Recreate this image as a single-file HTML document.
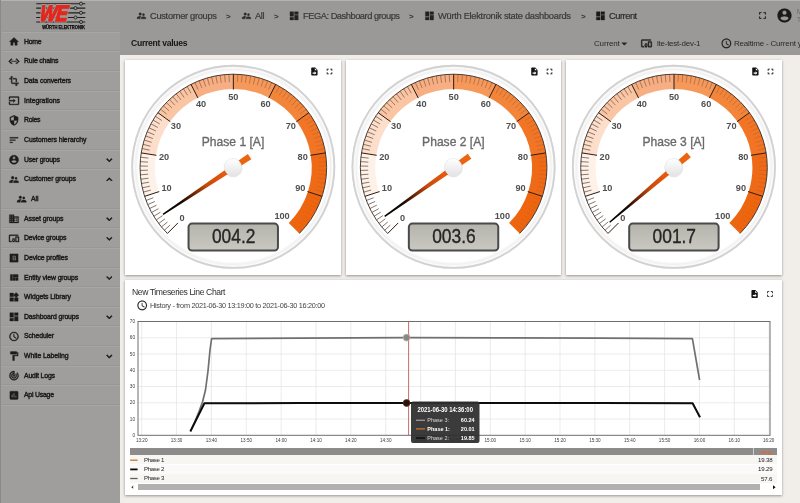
<!DOCTYPE html>
<html lang="en"><head><meta charset="utf-8"><title>Current</title>
<style>
html,body{margin:0;padding:0}
body{width:800px;height:503px;overflow:hidden;background:#f1eeea;position:relative;font-family:"Liberation Sans",sans-serif}
.t{position:absolute;white-space:nowrap;will-change:transform}
.abs{position:absolute}
#sidebar{position:absolute;left:0;top:0;width:120.25px;height:503px;background:#a09e9c;overflow:hidden}
#topbar{position:absolute;left:120.25px;top:0;width:679.75px;height:54.5px;background:#9b9998}
.sep{position:absolute;left:2px;width:118px;height:1px;background:#999796;box-shadow:0 0.8px 0 #aaa8a7}
.card{position:absolute;background:#fff;box-shadow:0 0.9px 2.6px 0.4px rgba(0,0,0,.42)}
svg{position:absolute;left:0;top:0;overflow:visible}
svg text{font-family:"Liberation Sans",sans-serif}
</style></head><body>

<div class="card" style="left:124.5px;top:59.5px;width:216.5px;height:215.5px"></div>
<div class="card" style="left:346px;top:59.5px;width:215px;height:215.5px"></div>
<div class="card" style="left:566px;top:59.5px;width:216px;height:215.5px"></div>
<div class="card" style="left:124.5px;top:279.5px;width:657.5px;height:215.5px"></div>
<div id="sidebar">
<div class="abs" style="left:0;top:0;width:120.25px;height:31px;background:#9d9b99"></div>
<div class="abs" style="left:0;top:0;width:120.25px;height:1px;background:#b5b3b2"></div>
<div class="abs" style="left:0;top:0;width:1px;height:503px;background:#8b8988"></div>
<div class="sep" style="top:30.50px"></div>
<div class="sep" style="top:50.19px"></div>
<div class="sep" style="top:69.88px"></div>
<div class="sep" style="top:89.57px"></div>
<div class="sep" style="top:109.26px"></div>
<div class="sep" style="top:128.95px"></div>
<div class="sep" style="top:148.64px"></div>
<div class="sep" style="top:168.33px"></div>
<div class="sep" style="top:207.71px"></div>
<div class="sep" style="top:227.32px"></div>
<div class="sep" style="top:246.93px"></div>
<div class="sep" style="top:266.54px"></div>
<div class="sep" style="top:286.15px"></div>
<div class="sep" style="top:305.76px"></div>
<div class="sep" style="top:325.37px"></div>
<div class="sep" style="top:344.98px"></div>
<div class="sep" style="top:364.59px"></div>
<div class="sep" style="top:384.20px"></div>
<div class="sep" style="top:403.81px"></div>
</div>
<span class="t" id="sb0" style="left:23.8px;top:37.51px;font-size:6.9px;line-height:8.28px;font-weight:400;color:#1d1d1d;letter-spacing:-0.297px;-webkit-text-stroke:0.42px #1a1a1a;">Home</span>
<span class="t" id="sb1" style="left:23.8px;top:57.20px;font-size:6.9px;line-height:8.28px;font-weight:400;color:#1d1d1d;letter-spacing:-0.152px;-webkit-text-stroke:0.42px #1a1a1a;">Rule chains</span>
<span class="t" id="sb2" style="left:23.8px;top:76.89px;font-size:6.9px;line-height:8.28px;font-weight:400;color:#1d1d1d;letter-spacing:-0.117px;-webkit-text-stroke:0.42px #1a1a1a;">Data converters</span>
<span class="t" id="sb3" style="left:23.8px;top:96.58px;font-size:6.9px;line-height:8.28px;font-weight:400;color:#1d1d1d;letter-spacing:-0.001px;-webkit-text-stroke:0.42px #1a1a1a;">Integrations</span>
<span class="t" id="sb4" style="left:23.8px;top:116.27px;font-size:6.9px;line-height:8.28px;font-weight:400;color:#1d1d1d;letter-spacing:-0.281px;-webkit-text-stroke:0.42px #1a1a1a;">Roles</span>
<span class="t" id="sb5" style="left:23.8px;top:135.96px;font-size:6.9px;line-height:8.28px;font-weight:400;color:#1d1d1d;letter-spacing:-0.060px;-webkit-text-stroke:0.42px #1a1a1a;">Customers hierarchy</span>
<span class="t" id="sb6" style="left:23.8px;top:155.65px;font-size:6.9px;line-height:8.28px;font-weight:400;color:#1d1d1d;letter-spacing:-0.155px;-webkit-text-stroke:0.42px #1a1a1a;">User groups</span>
<span class="t" id="sb7" style="left:23.8px;top:175.34px;font-size:6.9px;line-height:8.28px;font-weight:400;color:#1d1d1d;letter-spacing:-0.061px;-webkit-text-stroke:0.42px #1a1a1a;">Customer groups</span>
<span class="t" id="sb8" style="left:31px;top:195.03px;font-size:6.9px;line-height:8.28px;font-weight:400;color:#1d1d1d;letter-spacing:-0.086px;-webkit-text-stroke:0.42px #1a1a1a;">All</span>
<span class="t" id="sb9" style="left:23.8px;top:214.67px;font-size:6.9px;line-height:8.28px;font-weight:400;color:#1d1d1d;letter-spacing:-0.065px;-webkit-text-stroke:0.42px #1a1a1a;">Asset groups</span>
<span class="t" id="sb10" style="left:23.8px;top:234.28px;font-size:6.9px;line-height:8.28px;font-weight:400;color:#1d1d1d;letter-spacing:-0.129px;-webkit-text-stroke:0.42px #1a1a1a;">Device groups</span>
<span class="t" id="sb11" style="left:23.8px;top:253.90px;font-size:6.9px;line-height:8.28px;font-weight:400;color:#1d1d1d;letter-spacing:-0.086px;-webkit-text-stroke:0.42px #1a1a1a;">Device profiles</span>
<span class="t" id="sb12" style="left:23.8px;top:273.51px;font-size:6.9px;line-height:8.28px;font-weight:400;color:#1d1d1d;letter-spacing:-0.101px;-webkit-text-stroke:0.42px #1a1a1a;">Entity view groups</span>
<span class="t" id="sb13" style="left:23.8px;top:293.12px;font-size:6.9px;line-height:8.28px;font-weight:400;color:#1d1d1d;letter-spacing:-0.062px;-webkit-text-stroke:0.42px #1a1a1a;">Widgets Library</span>
<span class="t" id="sb14" style="left:23.8px;top:312.73px;font-size:6.9px;line-height:8.28px;font-weight:400;color:#1d1d1d;letter-spacing:-0.114px;-webkit-text-stroke:0.42px #1a1a1a;">Dashboard groups</span>
<span class="t" id="sb15" style="left:23.8px;top:332.34px;font-size:6.9px;line-height:8.28px;font-weight:400;color:#1d1d1d;letter-spacing:-0.129px;-webkit-text-stroke:0.42px #1a1a1a;">Scheduler</span>
<span class="t" id="sb16" style="left:23.8px;top:351.94px;font-size:6.9px;line-height:8.28px;font-weight:400;color:#1d1d1d;letter-spacing:-0.084px;-webkit-text-stroke:0.42px #1a1a1a;">White Labeling</span>
<span class="t" id="sb17" style="left:23.8px;top:371.56px;font-size:6.9px;line-height:8.28px;font-weight:400;color:#1d1d1d;letter-spacing:-0.174px;-webkit-text-stroke:0.42px #1a1a1a;">Audit Logs</span>
<span class="t" id="sb18" style="left:23.8px;top:391.17px;font-size:6.9px;line-height:8.28px;font-weight:400;color:#1d1d1d;letter-spacing:-0.225px;-webkit-text-stroke:0.42px #1a1a1a;">Api Usage</span>
<div id="topbar"><div class="abs" style="left:0;top:0;width:680px;height:1px;background:#b5b3b2"></div></div>
<span class="t" id="bc1" style="left:150px;top:11.12px;font-size:9.3px;line-height:11.16px;font-weight:400;color:#3a3a3a;letter-spacing:-0.308px;-webkit-text-stroke:0.22px #3a3a3a;">Customer groups</span>
<span class="t" id="bcs1" style="left:225.5px;top:11.50px;font-size:8px;line-height:9.6px;font-weight:700;color:#333;">&gt;</span>
<span class="t" id="bc2" style="left:255px;top:11.12px;font-size:9.3px;line-height:11.16px;font-weight:400;color:#3a3a3a;letter-spacing:-0.422px;-webkit-text-stroke:0.22px #3a3a3a;">All</span>
<span class="t" id="bcs2" style="left:273.5px;top:11.50px;font-size:8px;line-height:9.6px;font-weight:700;color:#333;">&gt;</span>
<span class="t" id="bc3" style="left:302.5px;top:11.12px;font-size:9.3px;line-height:11.16px;font-weight:400;color:#3a3a3a;letter-spacing:-0.475px;-webkit-text-stroke:0.22px #3a3a3a;">FEGA: Dashboard groups</span>
<span class="t" id="bcs3" style="left:408.5px;top:11.50px;font-size:8px;line-height:9.6px;font-weight:700;color:#333;">&gt;</span>
<span class="t" id="bc4" style="left:437.5px;top:11.12px;font-size:9.3px;line-height:11.16px;font-weight:400;color:#3a3a3a;letter-spacing:-0.285px;-webkit-text-stroke:0.22px #3a3a3a;">Würth Elektronik state dashboards</span>
<span class="t" id="bcs4" style="left:580.5px;top:11.50px;font-size:8px;line-height:9.6px;font-weight:700;color:#333;">&gt;</span>
<span class="t" id="bc5" style="left:608.8px;top:11.12px;font-size:9.3px;line-height:11.16px;font-weight:400;color:#222;letter-spacing:-0.469px;-webkit-text-stroke:0.22px #3a3a3a;">Current</span>
<span class="t" id="usr1" style="left:797px;top:7.60px;font-size:6.5px;line-height:7.8px;font-weight:400;color:#6a6866;">M</span>
<span class="t" id="usr2" style="left:797px;top:15.60px;font-size:6.5px;line-height:7.8px;font-weight:400;color:#6a6866;">T</span>
<span class="t" id="cv" style="left:130.5px;top:38.04px;font-size:8.6px;line-height:10.32px;font-weight:700;color:#151515;letter-spacing:-0.284px;">Current values</span>
<span class="t" id="st" style="left:594.3px;top:38.60px;font-size:8px;line-height:9.6px;font-weight:400;color:#2a2a2a;letter-spacing:-0.165px;">Current</span>
<span class="t" id="dev" style="left:657px;top:38.60px;font-size:8px;line-height:9.6px;font-weight:400;color:#2a2a2a;letter-spacing:-0.245px;">lte-test-dev-1</span>
<span class="t" id="rt" style="left:734px;top:38.60px;font-size:8px;line-height:9.6px;font-weight:400;color:#2a2a2a;letter-spacing:-0.2px;">Realtime - Current year</span>
<span class="t" id="ct" style="left:132px;top:287.14px;font-size:8.6px;line-height:10.32px;font-weight:400;color:#2e2e2e;letter-spacing:-0.403px;">New Timeseries Line Chart</span>
<span class="t" id="hs" style="left:150px;top:301.52px;font-size:7.3px;line-height:8.76px;font-weight:400;color:#444;letter-spacing:-0.294px;">History - from 2021-06-30 13:19:00 to 2021-06-30 16:20:00</span>
<div class="abs" style="left:130px;top:448.4px;width:647px;height:6.8px;background:#8e8c8b"></div>
<div class="abs" style="left:752.6px;top:448.4px;width:1px;height:6.8px;background:#cfcdcb"></div>
<span class="t" id="avg" style="left:766.4px;top:447.78px;font-size:6.2px;line-height:7.44px;font-weight:700;color:#e2653c;transform:translateX(-50%);">avg</span>
<div class="abs" style="left:130px;top:455.2px;width:647px;height:9.3px;background:#f8f6f2"></div>
<div class="abs" style="left:130px;top:464.5px;width:647px;height:9.3px;background:#fbfaf8"></div>
<div class="abs" style="left:130px;top:473.8px;width:647px;height:9.3px;background:#f8f6f2"></div>
<span class="t" id="lg0" style="left:143.6px;top:455.94px;font-size:6.1px;line-height:7.32px;font-weight:400;color:#222;letter-spacing:-0.346px;">Phase 1</span>
<span class="t" id="lv0" style="right:27.799999999999955px;top:456.24px;font-size:6.1px;line-height:7.32px;font-weight:400;color:#222;letter-spacing:-0.15px;">19.38</span>
<span class="t" id="lg1" style="left:143.6px;top:465.14px;font-size:6.1px;line-height:7.32px;font-weight:400;color:#222;letter-spacing:-0.346px;">Phase 2</span>
<span class="t" id="lv1" style="right:27.799999999999955px;top:465.44px;font-size:6.1px;line-height:7.32px;font-weight:400;color:#222;letter-spacing:-0.15px;">19.29</span>
<span class="t" id="lg2" style="left:143.6px;top:474.24px;font-size:6.1px;line-height:7.32px;font-weight:400;color:#222;letter-spacing:-0.346px;">Phase 3</span>
<span class="t" id="lv2" style="right:27.799999999999955px;top:474.54px;font-size:6.1px;line-height:7.32px;font-weight:400;color:#222;letter-spacing:-0.15px;">57.6</span>
<div class="abs" style="left:138px;top:484.3px;width:622px;height:5.4px;background:#b3b1af"></div>
<svg width="800" height="503" viewBox="0 0 800 503"><g transform="translate(8.50,36.15) scale(0.4583)" fill="#1c1c1c" stroke="#1c1c1c" stroke-width="0.7" stroke-linejoin="round"><path d="M10 20v-6h4v6h5v-8h3L12 3 2 12h3v8z"/></g>
<g transform="translate(8.50,55.84) scale(0.4583)" fill="#1c1c1c" stroke="#1c1c1c" stroke-width="0.7" stroke-linejoin="round"><path stroke-width="1.2" d="M7.8 7.4L6.4 6 0.4 12l6 6 1.4-1.4L3.2 12zM16.2 7.4L17.6 6l6 6-6 6-1.4-1.4L20.8 12z"/><rect x="7" y="11" width="2" height="2"/><rect x="11" y="11" width="2" height="2"/><rect x="15" y="11" width="2" height="2"/></g>
<g transform="translate(8.50,75.53) scale(0.4583)" fill="#1c1c1c" stroke="#1c1c1c" stroke-width="0.7" stroke-linejoin="round"><path d="M22 18v-2H8V4h2L7 1 4 4h2v2H2v2h4v8c0 1.1.9 2 2 2h8v2h-2l3 3 3-3h-2v-2h4zM10 8h6v6h2V8c0-1.1-.9-2-2-2h-6v2z"/></g>
<g transform="translate(8.50,95.22) scale(0.4583)" fill="#1c1c1c" stroke="#1c1c1c" stroke-width="0.7" stroke-linejoin="round"><path d="M21 3.01H3c-1.1 0-2 .9-2 2V9h2V4.99h18v14.03H3V15H1v4.01c0 1.1.9 1.98 2 1.98h18c1.1 0 2-.88 2-1.98v-14c0-1.11-.9-2-2-2zM11 16l4-4-4-4v3H1v2h10v3z"/></g>
<g transform="translate(8.50,114.91) scale(0.4583)" fill="#1c1c1c" stroke="#1c1c1c" stroke-width="0.7" stroke-linejoin="round"><path d="M12 1L3 5v6c0 5.55 3.84 10.74 9 12 5.16-1.26 9-6.45 9-12V5l-9-4zm0 10.99h7c-.53 4.12-3.28 7.79-7 8.94V12H5V6.3l7-3.11v8.8z"/></g>
<g transform="translate(8.50,134.59) scale(0.4583)" fill="#1c1c1c" stroke="#1c1c1c" stroke-width="0.7" stroke-linejoin="round"><path d="M3 18h6v-2H3v2zM3 6v2h18V6H3zm0 7h12v-2H3v2z"/></g>
<g transform="translate(8.50,154.28) scale(0.4583)" fill="#1c1c1c" stroke="#1c1c1c" stroke-width="0.7" stroke-linejoin="round"><path d="M12 2C6.48 2 2 6.48 2 12s4.48 10 10 10 10-4.48 10-10S17.52 2 12 2zm0 3c1.66 0 3 1.34 3 3s-1.34 3-3 3-3-1.34-3-3 1.340-3 3-3zm0 14.2c-2.5 0-4.71-1.280-6-3.220.03-1.990 4-3.080 6-3.080 1.990 0 5.970 1.090 6 3.080-1.290 1.940-3.500 3.220-6 3.220z"/></g>
<g transform="translate(103.80,154.59) scale(0.4583)" fill="#111" stroke="#111" stroke-width="0.7" stroke-linejoin="round"><path stroke="#111" stroke-width="1.3" d="M7.410 8.590L12 13.170l4.590-4.580L18 10l-6 6-6-6z"/></g>
<g transform="translate(8.50,173.97) scale(0.4583)" fill="#1c1c1c" stroke="#1c1c1c" stroke-width="0.7" stroke-linejoin="round"><path d="M16.5 12c1.380 0 2.490-1.120 2.490-2.500S17.880 7 16.500 7C15.120 7 14 8.120 14 9.500s1.120 2.500 2.500 2.500zM9 11c1.660 0 2.990-1.340 2.990-3S10.660 5 9 5C7.340 5 6 6.340 6 8s1.340 3 3 3zm7.500 3c-1.830 0-5.500.920-5.500 2.750V19h11v-2.250c0-1.830-3.670-2.750-5.500-2.750zM9 13c-2.330 0-7 1.170-7 3.500V19h7v-2.250c0-.850.330-2.340 2.370-3.470C10.500 13.100 9.660 13 9 13z"/></g>
<g transform="translate(103.80,173.97) scale(0.4583)" fill="#111" stroke="#111" stroke-width="0.7" stroke-linejoin="round"><path stroke="#111" stroke-width="1.3" d="M7.410 15.410L12 10.830l4.590 4.580L18 14l-6-6-6 6z"/></g>
<g transform="translate(16.20,193.66) scale(0.4583)" fill="#1c1c1c" stroke="#1c1c1c" stroke-width="0.7" stroke-linejoin="round"><path d="M16.5 12c1.380 0 2.490-1.120 2.490-2.500S17.880 7 16.500 7C15.120 7 14 8.120 14 9.500s1.120 2.500 2.500 2.500zM9 11c1.660 0 2.990-1.340 2.990-3S10.660 5 9 5C7.340 5 6 6.340 6 8s1.340 3 3 3zm7.500 3c-1.830 0-5.500.920-5.500 2.750V19h11v-2.250c0-1.830-3.670-2.750-5.500-2.750zM9 13c-2.330 0-7 1.170-7 3.500V19h7v-2.250c0-.850.330-2.340 2.370-3.470C10.500 13.100 9.660 13 9 13z"/></g>
<g transform="translate(8.50,213.31) scale(0.4583)" fill="#1c1c1c" stroke="#1c1c1c" stroke-width="0.7" stroke-linejoin="round"><path d="M12 7V3H2v18h20V7H12zM6 19H4v-2h2v2zm0-4H4v-2h2v2zm0-4H4V9h2v2zm0-4H4V5h2v2zm4 12H8v-2h2v2zm0-4H8v-2h2v2zm0-4H8V9h2v2zm0-4H8V5h2v2zm10 12h-8v-2h2v-2h-2v-2h2v-2h-2V9h8v10zm-2-8h-2v2h2v-2zm0 4h-2v2h2v-2z"/></g>
<g transform="translate(103.80,213.61) scale(0.4583)" fill="#111" stroke="#111" stroke-width="0.7" stroke-linejoin="round"><path stroke="#111" stroke-width="1.3" d="M7.410 8.590L12 13.170l4.590-4.580L18 10l-6 6-6-6z"/></g>
<g transform="translate(8.50,232.92) scale(0.4583)" fill="#1c1c1c" stroke="#1c1c1c" stroke-width="0.7" stroke-linejoin="round"><path d="M3 6h18V4H3c-1.100 0-2 .900-2 2v12c0 1.100.900 2 2 2h4v-2H3V6zm10 6H9v1.780c-.610.550-1 1.330-1 2.220s.390 1.670 1 2.220V20h4v-1.780c.610-.550 1-1.340 1-2.220s-.390-1.670-1-2.220V12zm-2 5.500c-.830 0-1.500-.670-1.500-1.500s.670-1.500 1.500-1.500 1.500.670 1.500 1.500-.670 1.500-1.500 1.500zM22 8h-6c-.500 0-1 .500-1 1v10c0 .500.500 1 1 1h6c.500 0 1-.500 1-1V9c0-.500-.500-1-1-1zm-1 10h-4v-8h4v8z"/></g>
<g transform="translate(103.80,233.22) scale(0.4583)" fill="#111" stroke="#111" stroke-width="0.7" stroke-linejoin="round"><path stroke="#111" stroke-width="1.3" d="M7.410 8.590L12 13.170l4.590-4.580L18 10l-6 6-6-6z"/></g>
<g transform="translate(8.50,252.54) scale(0.4583)" fill="#1c1c1c" stroke="#1c1c1c" stroke-width="0.7" stroke-linejoin="round"><path d="M3 3h18v18H3z"/><path fill="#a09e9c" d="M9 7h4.200c1.800 0 3 1 3 2.600 0 1-.5 1.700-1.300 2.100 1.100.3 1.800 1.200 1.800 2.400 0 1.800-1.300 2.900-3.300 2.900H9zm2 1.800v2.300h1.900c.8 0 1.300-.4 1.300-1.150s-.5-1.150-1.300-1.150zm0 4v2.400h2.200c.9 0 1.400-.4 1.400-1.200s-.5-1.200-1.400-1.200z"/></g>
<g transform="translate(8.50,272.15) scale(0.4583)" fill="#1c1c1c" stroke="#1c1c1c" stroke-width="0.7" stroke-linejoin="round"><path d="M10 18h5v-6h-5v6zm-6 0h5V5H4v13zm12 0h5v-6h-5v6zM10 5v6h11V5H10z"/></g>
<g transform="translate(103.80,272.45) scale(0.4583)" fill="#111" stroke="#111" stroke-width="0.7" stroke-linejoin="round"><path stroke="#111" stroke-width="1.3" d="M7.410 8.590L12 13.170l4.590-4.580L18 10l-6 6-6-6z"/></g>
<g transform="translate(8.50,291.75) scale(0.4583)" fill="#1c1c1c" stroke="#1c1c1c" stroke-width="0.7" stroke-linejoin="round"><path d="M13 13v8h8v-8h-8zM3 21h8v-8H3v8zM3 3v8h8V3H3zm13.660-1.310L11 7.340 16.660 13l5.660-5.660-5.660-5.650z"/></g>
<g transform="translate(8.50,311.37) scale(0.4583)" fill="#1c1c1c" stroke="#1c1c1c" stroke-width="0.7" stroke-linejoin="round"><path d="M3 13h8V3H3v10zm0 8h8v-6H3v6zm10 0h8V11h-8v10zm0-18v6h8V3h-8z"/></g>
<g transform="translate(103.80,311.67) scale(0.4583)" fill="#111" stroke="#111" stroke-width="0.7" stroke-linejoin="round"><path stroke="#111" stroke-width="1.3" d="M7.410 8.590L12 13.170l4.590-4.580L18 10l-6 6-6-6z"/></g>
<g transform="translate(8.50,330.98) scale(0.4583)" fill="#1c1c1c" stroke="#1c1c1c" stroke-width="0.7" stroke-linejoin="round"><path d="M11.990 2C6.470 2 2 6.480 2 12s4.470 10 9.990 10C17.520 22 22 17.520 22 12S17.520 2 11.990 2zM12 20c-4.420 0-8-3.580-8-8s3.580-8 8-8 8 3.580 8 8-3.580 8-8 8zm.500-13H11v6l5.250 3.150.750-1.230-4.500-2.670z"/></g>
<g transform="translate(8.50,350.58) scale(0.4583)" fill="#1c1c1c" stroke="#1c1c1c" stroke-width="0.7" stroke-linejoin="round"><path d="M18 4V3c0-.550-.450-1-1-1H5c-.550 0-1 .450-1 1v4c0 .550.450 1 1 1h12c.550 0 1-.450 1-1V6h1v4H9v11c0 .550.450 1 1 1h2c.550 0 1-.450 1-1v-9h8V4h-3z"/></g>
<g transform="translate(103.80,350.88) scale(0.4583)" fill="#111" stroke="#111" stroke-width="0.7" stroke-linejoin="round"><path stroke="#111" stroke-width="1.3" d="M7.410 8.590L12 13.170l4.590-4.580L18 10l-6 6-6-6z"/></g>
<g transform="translate(8.50,370.19) scale(0.4583)" fill="#1c1c1c" stroke="#1c1c1c" stroke-width="0.7" stroke-linejoin="round"><path d="M19.070 4.930l-1.410 1.410C19.100 7.790 20 9.790 20 12c0 4.420-3.580 8-8 8s-8-3.580-8-8c0-4.080 3.050-7.440 7-7.930v2.020C8.160 6.570 6 9.030 6 12c0 3.310 2.690 6 6 6s6-2.690 6-6c0-1.660-.670-3.160-1.760-4.240l-1.410 1.410C15.550 9.900 16 10.900 16 12c0 2.210-1.790 4-4 4s-4-1.790-4-4c0-1.860 1.280-3.410 3-3.860v2.140c-.600.350-1 .980-1 1.720 0 1.100.900 2 2 2s2-.900 2-2c0-.740-.400-1.380-1-1.720V2h-1C6.480 2 2 6.480 2 12s4.480 10 10 10 10-4.480 10-10c0-2.760-1.120-5.260-2.930-7.070z"/></g>
<g transform="translate(8.50,389.81) scale(0.4583)" fill="#1c1c1c" stroke="#1c1c1c" stroke-width="0.7" stroke-linejoin="round"><path d="M19 3H5c-1.100 0-2 .900-2 2v14c0 1.100.900 2 2 2h14c1.100 0 2-.900 2-2V5c0-1.100-.900-2-2-2zM9 17H7v-7h2v7zm4 0h-2V7h2v10zm4 0h-2v-4h2v4z"/></g>
<line x1="36.2" y1="3.7" x2="85.3" y2="3.7" stroke="#1e1e1e" stroke-width="1.15"/>
<circle cx="81" cy="3.7" r="1.55" fill="#9d9b99" stroke="#222" stroke-width="0.9"/>
<line x1="36.2" y1="8.1" x2="85.3" y2="8.1" stroke="#1e1e1e" stroke-width="1.15"/>
<circle cx="75.5" cy="8.1" r="1.55" fill="#9d9b99" stroke="#222" stroke-width="0.9"/>
<line x1="36.2" y1="12.8" x2="85.3" y2="12.8" stroke="#1e1e1e" stroke-width="1.15"/>
<circle cx="81" cy="12.8" r="1.55" fill="#9d9b99" stroke="#222" stroke-width="0.9"/>
<line x1="36.2" y1="17.5" x2="85.3" y2="17.5" stroke="#1e1e1e" stroke-width="1.15"/>
<circle cx="75.5" cy="17.5" r="1.55" fill="#9d9b99" stroke="#222" stroke-width="0.9"/>
<line x1="36.2" y1="22.0" x2="85.3" y2="22.0" stroke="#1e1e1e" stroke-width="1.15"/>
<circle cx="81" cy="22.0" r="1.55" fill="#9d9b99" stroke="#222" stroke-width="0.9"/>
<text transform="translate(39.3,20.6) skewX(-7) scale(0.80,1)" font-size="22.3" font-weight="700" font-style="italic" fill="#e5261c" stroke="#9d9b99" stroke-width="3.2" letter-spacing="-1.2">WE</text>
<text transform="translate(39.3,20.6) skewX(-7) scale(0.80,1)" font-size="22.3" font-weight="700" font-style="italic" fill="#e5261c" stroke="#e5261c" stroke-width="1.3" letter-spacing="-1.2">WE</text>
<text x="42.2" y="28.5" font-size="4.9" font-weight="700" fill="#0a0a0a" stroke="#0a0a0a" stroke-width="0.25" textLength="42.7" lengthAdjust="spacingAndGlyphs">WÜRTH ELEKTRONIK</text>
<g transform="translate(136.25,10.55) scale(0.4375)" fill="#2a2a2a" stroke="#2a2a2a" stroke-width="0.7" stroke-linejoin="round"><path d="M16.5 12c1.380 0 2.490-1.120 2.490-2.500S17.880 7 16.500 7C15.120 7 14 8.120 14 9.500s1.120 2.500 2.500 2.500zM9 11c1.660 0 2.990-1.340 2.990-3S10.660 5 9 5C7.340 5 6 6.340 6 8s1.340 3 3 3zm7.500 3c-1.830 0-5.500.920-5.500 2.750V19h11v-2.250c0-1.830-3.670-2.750-5.500-2.750zM9 13c-2.330 0-7 1.170-7 3.500V19h7v-2.250c0-.850.330-2.340 2.370-3.470C10.500 13.100 9.660 13 9 13z"/></g>
<g transform="translate(241.25,10.55) scale(0.4375)" fill="#2a2a2a" stroke="#2a2a2a" stroke-width="0.7" stroke-linejoin="round"><path d="M16.5 12c1.380 0 2.490-1.120 2.490-2.500S17.880 7 16.500 7C15.120 7 14 8.120 14 9.500s1.120 2.500 2.500 2.500zM9 11c1.660 0 2.990-1.340 2.990-3S10.660 5 9 5C7.340 5 6 6.340 6 8s1.340 3 3 3zm7.500 3c-1.830 0-5.500.920-5.500 2.750V19h11v-2.250c0-1.830-3.670-2.750-5.500-2.750zM9 13c-2.330 0-7 1.170-7 3.500V19h7v-2.250c0-.850.330-2.340 2.370-3.470C10.500 13.100 9.660 13 9 13z"/></g>
<g transform="translate(288.60,10.30) scale(0.4583)" fill="#222" stroke="#222" stroke-width="0.7" stroke-linejoin="round"><path d="M3 13h8V3H3v10zm0 8h8v-6H3v6zm10 0h8V11h-8v10zm0-18v6h8V3h-8z"/></g>
<g transform="translate(424.00,10.30) scale(0.4583)" fill="#222" stroke="#222" stroke-width="0.7" stroke-linejoin="round"><path d="M3 13h8V3H3v10zm0 8h8v-6H3v6zm10 0h8V11h-8v10zm0-18v6h8V3h-8z"/></g>
<g transform="translate(595.00,10.30) scale(0.4583)" fill="#1a1a1a" stroke="#1a1a1a" stroke-width="0.7" stroke-linejoin="round"><path d="M3 13h8V3H3v10zm0 8h8v-6H3v6zm10 0h8V11h-8v10zm0-18v6h8V3h-8z"/></g>
<g transform="translate(756.75,9.75) scale(0.4792)" fill="#1a1a1a" stroke="#1a1a1a" stroke-width="0.2" stroke-linejoin="round"><path d="M7 14H5v5h5v-2H7v-3zm-2-4h2V7h3V5H5v5zm12 7h-3v2h5v-5h-2v3zM14 5v2h3v3h2V5h-5z"/></g>
<g transform="translate(776.10,7.10) scale(0.7000)" fill="#1a1a1a" stroke="#1a1a1a" stroke-width="0.2" stroke-linejoin="round"><path d="M12 2C6.48 2 2 6.48 2 12s4.48 10 10 10 10-4.48 10-10S17.52 2 12 2zm0 3c1.66 0 3 1.34 3 3s-1.34 3-3 3-3-1.34-3-3 1.340-3 3-3zm0 14.2c-2.5 0-4.71-1.280-6-3.220.03-1.990 4-3.080 6-3.080 1.990 0 5.970 1.090 6 3.080-1.290 1.940-3.500 3.220-6 3.220z"/></g>
<g transform="translate(618.05,37.55) scale(0.5208)" fill="#222" stroke="#222" stroke-width="0.7" stroke-linejoin="round"><path d="M7 10l5 5 5-5z"/></g>
<g transform="translate(640.75,37.65) scale(0.4792)" fill="#1e1e1e" stroke="#1e1e1e" stroke-width="0.7" stroke-linejoin="round"><path d="M3 6h18V4H3c-1.100 0-2 .900-2 2v12c0 1.100.900 2 2 2h4v-2H3V6zm10 6H9v1.780c-.610.550-1 1.330-1 2.220s.390 1.670 1 2.220V20h4v-1.780c.610-.550 1-1.340 1-2.220s-.390-1.670-1-2.220V12zm-2 5.500c-.830 0-1.500-.670-1.500-1.500s.670-1.500 1.500-1.500 1.500.670 1.500 1.500-.670 1.500-1.500 1.500zM22 8h-6c-.500 0-1 .500-1 1v10c0 .500.500 1 1 1h6c.500 0 1-.500 1-1V9c0-.500-.500-1-1-1zm-1 10h-4v-8h4v8z"/></g>
<g transform="translate(720.65,37.65) scale(0.4792)" fill="#1e1e1e" stroke="#1e1e1e" stroke-width="0.3" stroke-linejoin="round"><path d="M11.990 2C6.470 2 2 6.480 2 12s4.470 10 9.990 10C17.520 22 22 17.520 22 12S17.520 2 11.990 2zM12 20c-4.420 0-8-3.580-8-8s3.580-8 8-8 8 3.580 8 8-3.580 8-8 8zm.500-13H11v6l5.250 3.150.750-1.230-4.500-2.670z"/></g>
<defs><radialGradient id="pla" cx="50%" cy="50%" r="50%"><stop offset="0" stop-color="#fff"/><stop offset="0.93" stop-color="#fff"/><stop offset="0.955" stop-color="#f1f1f1"/><stop offset="0.975" stop-color="#fbfbfb"/><stop offset="1" stop-color="#e4e4e4"/></radialGradient><linearGradient id="nda" gradientUnits="userSpaceOnUse" x1="0" y1="84" x2="0" y2="-20"><stop offset="0" stop-color="#000"/><stop offset="0.22" stop-color="#1a0a02"/><stop offset="0.5" stop-color="#c9490a"/><stop offset="0.7" stop-color="#e8590c"/><stop offset="1" stop-color="#ee6611"/></linearGradient><linearGradient id="cpa" x1="0" y1="0" x2="0" y2="1"><stop offset="0" stop-color="#ffffff"/><stop offset="1" stop-color="#e4e4e4"/></linearGradient><linearGradient id="vba" x1="0" y1="0" x2="0" y2="1"><stop offset="0" stop-color="#b4b4ac"/><stop offset="1" stop-color="#c9c9c1"/></linearGradient></defs><circle cx="233.25" cy="166.85" r="102" fill="url(#pla)"/><circle cx="233.25" cy="166.85" r="101.1" fill="none" stroke="#d2d2d2" stroke-width="1.8"/><path d="M167.38 233.47A93.3 93.3 0 0 1 144.62 196.33L158.79 191.73A78.4 78.4 0 0 0 177.91 222.94Z" fill="#ffffff"/><path d="M144.62 196.33A93.3 93.3 0 0 1 141.20 152.90L155.92 155.24A78.4 78.4 0 0 0 158.79 191.73Z" fill="#fef1e8"/><path d="M141.20 152.90A93.3 93.3 0 0 1 157.87 112.66L169.92 121.42A78.4 78.4 0 0 0 155.92 155.24Z" fill="#fcdecb"/><path d="M157.87 112.66A93.3 93.3 0 0 1 190.99 84.37L197.76 97.65A78.4 78.4 0 0 0 169.92 121.42Z" fill="#f9c5a3"/><path d="M190.99 84.37A93.3 93.3 0 0 1 233.35 74.20L233.35 89.10A78.4 78.4 0 0 0 197.76 97.65Z" fill="#f7ae82"/><path d="M233.35 74.20A93.3 93.3 0 0 1 275.71 84.37L268.94 97.65A78.4 78.4 0 0 0 233.35 89.10Z" fill="#f5985a"/><path d="M275.71 84.37A93.3 93.3 0 0 1 308.83 112.66L296.78 121.42A78.4 78.4 0 0 0 268.94 97.65Z" fill="#f3853a"/><path d="M308.83 112.66A93.3 93.3 0 0 1 325.50 152.90L310.78 155.24A78.4 78.4 0 0 0 296.78 121.42Z" fill="#f17525"/><path d="M325.50 152.90A93.3 93.3 0 0 1 322.08 196.33L307.91 191.73A78.4 78.4 0 0 0 310.78 155.24Z" fill="#ef6a17"/><path d="M322.08 196.33A93.3 93.3 0 0 1 299.32 233.47L288.79 222.94A78.4 78.4 0 0 0 307.91 191.73Z" fill="#ee6510"/><path d="M164.34 230.29L170.11 225.04M161.46 226.97L167.47 222.00M158.74 223.52L164.98 218.84M156.18 219.94L162.63 215.56M153.80 216.25L160.45 212.17M151.59 212.45L158.43 208.69M149.56 208.55L156.57 205.11M147.72 204.55L154.88 201.46M146.07 200.48L153.37 197.72" stroke="#3e2a1e" stroke-opacity="0.85" stroke-width="0.75" fill="none"/><path d="M143.36 192.12L150.88 190.06M142.30 187.85L149.91 186.15M141.44 183.54L149.12 182.20M140.79 179.19L148.52 178.22M140.34 174.82L148.11 174.21M140.10 170.43L147.89 170.19M140.06 166.03L147.86 166.16M140.23 161.64L148.02 162.13M140.61 157.26L148.37 158.12" stroke="#3e2a1e" stroke-opacity="0.82" stroke-width="0.75" fill="none"/><path d="M141.99 148.58L149.63 150.16M142.98 144.30L150.54 146.24M144.17 140.07L151.63 142.36M145.57 135.90L152.90 138.54M147.15 131.80L154.36 134.78M148.93 127.77L155.99 131.10M150.89 123.84L157.79 127.49M153.04 120.01L159.76 123.98M155.37 116.28L161.89 120.56" stroke="#3e2a1e" stroke-opacity="0.78" stroke-width="0.75" fill="none"/><path d="M160.54 109.16L166.62 114.04M163.36 105.80L169.22 110.96M166.35 102.57L171.95 108.00M169.48 99.49L174.82 105.17M172.76 96.55L177.82 102.49M176.17 93.78L180.95 99.94M179.70 91.17L184.19 97.55M183.36 88.72L187.54 95.31M187.12 86.46L190.99 93.23" stroke="#3e2a1e" stroke-opacity="0.66" stroke-width="0.75" fill="none"/><path d="M194.96 82.47L198.17 89.58M199.00 80.75L201.88 88.00M203.13 79.23L205.66 86.61M207.32 77.90L209.50 85.39M211.57 76.78L213.39 84.36M215.87 75.85L217.33 83.51M220.20 75.13L221.30 82.85M224.57 74.61L225.30 82.38M228.95 74.30L229.32 82.09" stroke="#3e2a1e" stroke-opacity="0.55" stroke-width="0.75" fill="none"/><path d="M237.75 74.30L237.38 82.09M242.13 74.61L241.40 82.38M246.50 75.13L245.40 82.85M250.83 75.85L249.37 83.51M255.13 76.78L253.31 84.36M259.38 77.90L257.20 85.39M263.57 79.23L261.04 86.61M267.70 80.75L264.82 88.00M271.74 82.47L268.53 89.58" stroke="#3e2a1e" stroke-opacity="0.42" stroke-width="0.75" fill="none"/><path d="M279.58 86.46L275.71 93.23M283.34 88.72L279.16 95.31M287.00 91.17L282.51 97.55M290.53 93.78L285.75 99.94M293.94 96.55L288.88 102.49M297.22 99.49L291.88 105.17M300.35 102.57L294.75 108.00M303.34 105.80L297.48 110.96M306.16 109.16L300.08 114.04" stroke="#3e2a1e" stroke-opacity="0.3" stroke-width="0.75" fill="none"/><path d="M311.33 116.28L304.81 120.56M313.66 120.01L306.94 123.98M315.81 123.84L308.91 127.49M317.77 127.77L310.71 131.10M319.55 131.80L312.34 134.78M321.13 135.90L313.80 138.54M322.53 140.07L315.07 142.36M323.72 144.30L316.16 146.24M324.71 148.58L317.07 150.16" stroke="#3e2a1e" stroke-opacity="0.2" stroke-width="0.75" fill="none"/><path d="M326.09 157.26L318.33 158.12M326.47 161.64L318.68 162.13M326.64 166.03L318.84 166.16M326.60 170.43L318.81 170.19M326.36 174.82L318.59 174.21M325.91 179.19L318.18 178.22M325.26 183.54L317.58 182.20M324.40 187.85L316.79 186.15M323.34 192.12L315.82 190.06" stroke="#3e2a1e" stroke-opacity="0.14" stroke-width="0.75" fill="none"/><path d="M320.63 200.48L313.33 197.72M318.98 204.55L311.82 201.46M317.14 208.55L310.13 205.11M315.11 212.45L308.27 208.69M312.90 216.25L306.25 212.17M310.52 219.94L304.07 215.56M307.96 223.52L301.72 218.84M305.24 226.97L299.23 222.00M302.36 230.29L296.59 225.04" stroke="#3e2a1e" stroke-opacity="0.1" stroke-width="0.75" fill="none"/><path d="M167.38 233.47A93.3 93.3 0 1 1 299.32 233.47" stroke="#3a2a22" stroke-width="0.9" fill="none"/><line x1="167.38" y1="233.47" x2="177.91" y2="222.94" stroke="#2a1a12" stroke-width="1"/><line x1="144.62" y1="196.33" x2="159.26" y2="191.57" stroke="#2a1a12" stroke-width="1"/><line x1="141.20" y1="152.90" x2="156.41" y2="155.31" stroke="#2a1a12" stroke-width="1"/><line x1="157.87" y1="112.66" x2="170.33" y2="121.71" stroke="#2a1a12" stroke-width="1"/><line x1="190.99" y1="84.37" x2="197.98" y2="98.09" stroke="#2a1a12" stroke-width="1"/><line x1="233.35" y1="74.20" x2="233.35" y2="89.60" stroke="#2a1a12" stroke-width="1"/><line x1="275.71" y1="84.37" x2="268.72" y2="98.09" stroke="#2a1a12" stroke-width="1"/><line x1="308.83" y1="112.66" x2="296.37" y2="121.71" stroke="#2a1a12" stroke-width="1"/><line x1="325.50" y1="152.90" x2="310.29" y2="155.31" stroke="#2a1a12" stroke-width="1"/><line x1="322.08" y1="196.33" x2="307.44" y2="191.57" stroke="#2a1a12" stroke-width="1"/><text x="182.15" y="220.90" font-size="9.2" font-weight="700" fill="#505050" text-anchor="middle">0</text><text x="166.62" y="191.24" font-size="9.2" font-weight="700" fill="#505050" text-anchor="middle">10</text><text x="164.02" y="159.59" font-size="9.2" font-weight="700" fill="#505050" text-anchor="middle">20</text><text x="175.91" y="128.97" font-size="9.2" font-weight="700" fill="#505050" text-anchor="middle">30</text><text x="201.12" y="107.44" font-size="9.2" font-weight="700" fill="#505050" text-anchor="middle">40</text><text x="233.35" y="99.70" font-size="9.2" font-weight="700" fill="#505050" text-anchor="middle">50</text><text x="265.58" y="107.44" font-size="9.2" font-weight="700" fill="#505050" text-anchor="middle">60</text><text x="290.79" y="128.97" font-size="9.2" font-weight="700" fill="#505050" text-anchor="middle">70</text><text x="302.68" y="159.59" font-size="9.2" font-weight="700" fill="#505050" text-anchor="middle">80</text><text x="300.28" y="191.34" font-size="9.2" font-weight="700" fill="#505050" text-anchor="middle">90</text><text x="282.05" y="218.50" font-size="9.2" font-weight="700" fill="#505050" text-anchor="middle">100</text><text x="233.04999999999998" y="145.70" font-size="13.2" fill="#6a6a6a" stroke="#6a6a6a" stroke-width="0.35" text-anchor="middle" textLength="62.5" lengthAdjust="spacingAndGlyphs">Phase 1 [A]</text><rect x="188.55" y="223.6" width="89.39999999999998" height="26.900000000000006" rx="3.5" fill="url(#vba)" stroke="#4a4a4a" stroke-width="2"/><text x="233.65" y="242.6" font-size="20" fill="#262626" stroke="#262626" stroke-width="0.35" text-anchor="middle" textLength="43.5" lengthAdjust="spacingAndGlyphs">004.2</text><g transform="translate(233.35,167.5) rotate(56.34)"><path d="M-0.7 84.5L0.7 84.5L3.1 -19.5L-3.1 -19.5Z" fill="url(#nda)"/></g><circle cx="233.15" cy="167.9" r="9.3" fill="#000" opacity="0.10"/><circle cx="232.85" cy="167.1" r="8.7" fill="url(#cpa)" stroke="#e6e6e6" stroke-width="0.6"/>
<defs><radialGradient id="plb" cx="50%" cy="50%" r="50%"><stop offset="0" stop-color="#fff"/><stop offset="0.93" stop-color="#fff"/><stop offset="0.955" stop-color="#f1f1f1"/><stop offset="0.975" stop-color="#fbfbfb"/><stop offset="1" stop-color="#e4e4e4"/></radialGradient><linearGradient id="ndb" gradientUnits="userSpaceOnUse" x1="0" y1="84" x2="0" y2="-20"><stop offset="0" stop-color="#000"/><stop offset="0.22" stop-color="#1a0a02"/><stop offset="0.5" stop-color="#c9490a"/><stop offset="0.7" stop-color="#e8590c"/><stop offset="1" stop-color="#ee6611"/></linearGradient><linearGradient id="cpb" x1="0" y1="0" x2="0" y2="1"><stop offset="0" stop-color="#ffffff"/><stop offset="1" stop-color="#e4e4e4"/></linearGradient><linearGradient id="vbb" x1="0" y1="0" x2="0" y2="1"><stop offset="0" stop-color="#b4b4ac"/><stop offset="1" stop-color="#c9c9c1"/></linearGradient></defs><circle cx="453.54999999999995" cy="166.85" r="102" fill="url(#plb)"/><circle cx="453.54999999999995" cy="166.85" r="101.1" fill="none" stroke="#d2d2d2" stroke-width="1.8"/><path d="M387.68 233.47A93.3 93.3 0 0 1 364.92 196.33L379.09 191.73A78.4 78.4 0 0 0 398.21 222.94Z" fill="#ffffff"/><path d="M364.92 196.33A93.3 93.3 0 0 1 361.50 152.90L376.22 155.24A78.4 78.4 0 0 0 379.09 191.73Z" fill="#fef1e8"/><path d="M361.50 152.90A93.3 93.3 0 0 1 378.17 112.66L390.22 121.42A78.4 78.4 0 0 0 376.22 155.24Z" fill="#fcdecb"/><path d="M378.17 112.66A93.3 93.3 0 0 1 411.29 84.37L418.06 97.65A78.4 78.4 0 0 0 390.22 121.42Z" fill="#f9c5a3"/><path d="M411.29 84.37A93.3 93.3 0 0 1 453.65 74.20L453.65 89.10A78.4 78.4 0 0 0 418.06 97.65Z" fill="#f7ae82"/><path d="M453.65 74.20A93.3 93.3 0 0 1 496.01 84.37L489.24 97.65A78.4 78.4 0 0 0 453.65 89.10Z" fill="#f5985a"/><path d="M496.01 84.37A93.3 93.3 0 0 1 529.13 112.66L517.08 121.42A78.4 78.4 0 0 0 489.24 97.65Z" fill="#f3853a"/><path d="M529.13 112.66A93.3 93.3 0 0 1 545.80 152.90L531.08 155.24A78.4 78.4 0 0 0 517.08 121.42Z" fill="#f17525"/><path d="M545.80 152.90A93.3 93.3 0 0 1 542.38 196.33L528.21 191.73A78.4 78.4 0 0 0 531.08 155.24Z" fill="#ef6a17"/><path d="M542.38 196.33A93.3 93.3 0 0 1 519.62 233.47L509.09 222.94A78.4 78.4 0 0 0 528.21 191.73Z" fill="#ee6510"/><path d="M384.64 230.29L390.41 225.04M381.76 226.97L387.77 222.00M379.04 223.52L385.28 218.84M376.48 219.94L382.93 215.56M374.10 216.25L380.75 212.17M371.89 212.45L378.73 208.69M369.86 208.55L376.87 205.11M368.02 204.55L375.18 201.46M366.37 200.48L373.67 197.72" stroke="#3e2a1e" stroke-opacity="0.85" stroke-width="0.75" fill="none"/><path d="M363.66 192.12L371.18 190.06M362.60 187.85L370.21 186.15M361.74 183.54L369.42 182.20M361.09 179.19L368.82 178.22M360.64 174.82L368.41 174.21M360.40 170.43L368.19 170.19M360.36 166.03L368.16 166.16M360.53 161.64L368.32 162.13M360.91 157.26L368.67 158.12" stroke="#3e2a1e" stroke-opacity="0.82" stroke-width="0.75" fill="none"/><path d="M362.29 148.58L369.93 150.16M363.28 144.30L370.84 146.24M364.47 140.07L371.93 142.36M365.87 135.90L373.20 138.54M367.45 131.80L374.66 134.78M369.23 127.77L376.29 131.10M371.19 123.84L378.09 127.49M373.34 120.01L380.06 123.98M375.67 116.28L382.19 120.56" stroke="#3e2a1e" stroke-opacity="0.78" stroke-width="0.75" fill="none"/><path d="M380.84 109.16L386.92 114.04M383.66 105.80L389.52 110.96M386.65 102.57L392.25 108.00M389.78 99.49L395.12 105.17M393.06 96.55L398.12 102.49M396.47 93.78L401.25 99.94M400.00 91.17L404.49 97.55M403.66 88.72L407.84 95.31M407.42 86.46L411.29 93.23" stroke="#3e2a1e" stroke-opacity="0.66" stroke-width="0.75" fill="none"/><path d="M415.26 82.47L418.47 89.58M419.30 80.75L422.18 88.00M423.43 79.23L425.96 86.61M427.62 77.90L429.80 85.39M431.87 76.78L433.69 84.36M436.17 75.85L437.63 83.51M440.50 75.13L441.60 82.85M444.87 74.61L445.60 82.38M449.25 74.30L449.62 82.09" stroke="#3e2a1e" stroke-opacity="0.55" stroke-width="0.75" fill="none"/><path d="M458.05 74.30L457.68 82.09M462.43 74.61L461.70 82.38M466.80 75.13L465.70 82.85M471.13 75.85L469.67 83.51M475.43 76.78L473.61 84.36M479.68 77.90L477.50 85.39M483.87 79.23L481.34 86.61M488.00 80.75L485.12 88.00M492.04 82.47L488.83 89.58" stroke="#3e2a1e" stroke-opacity="0.42" stroke-width="0.75" fill="none"/><path d="M499.88 86.46L496.01 93.23M503.64 88.72L499.46 95.31M507.30 91.17L502.81 97.55M510.83 93.78L506.05 99.94M514.24 96.55L509.18 102.49M517.52 99.49L512.18 105.17M520.65 102.57L515.05 108.00M523.64 105.80L517.78 110.96M526.46 109.16L520.38 114.04" stroke="#3e2a1e" stroke-opacity="0.3" stroke-width="0.75" fill="none"/><path d="M531.63 116.28L525.11 120.56M533.96 120.01L527.24 123.98M536.11 123.84L529.21 127.49M538.07 127.77L531.01 131.10M539.85 131.80L532.64 134.78M541.43 135.90L534.10 138.54M542.83 140.07L535.37 142.36M544.02 144.30L536.46 146.24M545.01 148.58L537.37 150.16" stroke="#3e2a1e" stroke-opacity="0.2" stroke-width="0.75" fill="none"/><path d="M546.39 157.26L538.63 158.12M546.77 161.64L538.98 162.13M546.94 166.03L539.14 166.16M546.90 170.43L539.11 170.19M546.66 174.82L538.89 174.21M546.21 179.19L538.48 178.22M545.56 183.54L537.88 182.20M544.70 187.85L537.09 186.15M543.64 192.12L536.12 190.06" stroke="#3e2a1e" stroke-opacity="0.14" stroke-width="0.75" fill="none"/><path d="M540.93 200.48L533.63 197.72M539.28 204.55L532.12 201.46M537.44 208.55L530.43 205.11M535.41 212.45L528.57 208.69M533.20 216.25L526.55 212.17M530.82 219.94L524.37 215.56M528.26 223.52L522.02 218.84M525.54 226.97L519.53 222.00M522.66 230.29L516.89 225.04" stroke="#3e2a1e" stroke-opacity="0.1" stroke-width="0.75" fill="none"/><path d="M387.68 233.47A93.3 93.3 0 1 1 519.62 233.47" stroke="#3a2a22" stroke-width="0.9" fill="none"/><line x1="387.68" y1="233.47" x2="398.21" y2="222.94" stroke="#2a1a12" stroke-width="1"/><line x1="364.92" y1="196.33" x2="379.56" y2="191.57" stroke="#2a1a12" stroke-width="1"/><line x1="361.50" y1="152.90" x2="376.71" y2="155.31" stroke="#2a1a12" stroke-width="1"/><line x1="378.17" y1="112.66" x2="390.63" y2="121.71" stroke="#2a1a12" stroke-width="1"/><line x1="411.29" y1="84.37" x2="418.28" y2="98.09" stroke="#2a1a12" stroke-width="1"/><line x1="453.65" y1="74.20" x2="453.65" y2="89.60" stroke="#2a1a12" stroke-width="1"/><line x1="496.01" y1="84.37" x2="489.02" y2="98.09" stroke="#2a1a12" stroke-width="1"/><line x1="529.13" y1="112.66" x2="516.67" y2="121.71" stroke="#2a1a12" stroke-width="1"/><line x1="545.80" y1="152.90" x2="530.59" y2="155.31" stroke="#2a1a12" stroke-width="1"/><line x1="542.38" y1="196.33" x2="527.74" y2="191.57" stroke="#2a1a12" stroke-width="1"/><text x="402.45" y="220.90" font-size="9.2" font-weight="700" fill="#505050" text-anchor="middle">0</text><text x="386.92" y="191.24" font-size="9.2" font-weight="700" fill="#505050" text-anchor="middle">10</text><text x="384.32" y="159.59" font-size="9.2" font-weight="700" fill="#505050" text-anchor="middle">20</text><text x="396.21" y="128.97" font-size="9.2" font-weight="700" fill="#505050" text-anchor="middle">30</text><text x="421.42" y="107.44" font-size="9.2" font-weight="700" fill="#505050" text-anchor="middle">40</text><text x="453.65" y="99.70" font-size="9.2" font-weight="700" fill="#505050" text-anchor="middle">50</text><text x="485.88" y="107.44" font-size="9.2" font-weight="700" fill="#505050" text-anchor="middle">60</text><text x="511.09" y="128.97" font-size="9.2" font-weight="700" fill="#505050" text-anchor="middle">70</text><text x="522.98" y="159.59" font-size="9.2" font-weight="700" fill="#505050" text-anchor="middle">80</text><text x="520.58" y="191.34" font-size="9.2" font-weight="700" fill="#505050" text-anchor="middle">90</text><text x="502.35" y="218.50" font-size="9.2" font-weight="700" fill="#505050" text-anchor="middle">100</text><text x="453.34999999999997" y="145.70" font-size="13.2" fill="#6a6a6a" stroke="#6a6a6a" stroke-width="0.35" text-anchor="middle" textLength="62.5" lengthAdjust="spacingAndGlyphs">Phase 2 [A]</text><rect x="408.84999999999997" y="223.6" width="89.40000000000003" height="26.900000000000006" rx="3.5" fill="url(#vbb)" stroke="#4a4a4a" stroke-width="2"/><text x="453.95" y="242.6" font-size="20" fill="#262626" stroke="#262626" stroke-width="0.35" text-anchor="middle" textLength="43.5" lengthAdjust="spacingAndGlyphs">003.6</text><g transform="translate(453.65,167.5) rotate(54.72)"><path d="M-0.7 84.5L0.7 84.5L3.1 -19.5L-3.1 -19.5Z" fill="url(#ndb)"/></g><circle cx="453.45" cy="167.9" r="9.3" fill="#000" opacity="0.10"/><circle cx="453.15" cy="167.1" r="8.7" fill="url(#cpb)" stroke="#e6e6e6" stroke-width="0.6"/>
<defs><radialGradient id="plc" cx="50%" cy="50%" r="50%"><stop offset="0" stop-color="#fff"/><stop offset="0.93" stop-color="#fff"/><stop offset="0.955" stop-color="#f1f1f1"/><stop offset="0.975" stop-color="#fbfbfb"/><stop offset="1" stop-color="#e4e4e4"/></radialGradient><linearGradient id="ndc" gradientUnits="userSpaceOnUse" x1="0" y1="84" x2="0" y2="-20"><stop offset="0" stop-color="#000"/><stop offset="0.22" stop-color="#1a0a02"/><stop offset="0.5" stop-color="#c9490a"/><stop offset="0.7" stop-color="#e8590c"/><stop offset="1" stop-color="#ee6611"/></linearGradient><linearGradient id="cpc" x1="0" y1="0" x2="0" y2="1"><stop offset="0" stop-color="#ffffff"/><stop offset="1" stop-color="#e4e4e4"/></linearGradient><linearGradient id="vbc" x1="0" y1="0" x2="0" y2="1"><stop offset="0" stop-color="#b4b4ac"/><stop offset="1" stop-color="#c9c9c1"/></linearGradient></defs><circle cx="673.9" cy="166.85" r="102" fill="url(#plc)"/><circle cx="673.9" cy="166.85" r="101.1" fill="none" stroke="#d2d2d2" stroke-width="1.8"/><path d="M608.03 233.47A93.3 93.3 0 0 1 585.27 196.33L599.44 191.73A78.4 78.4 0 0 0 618.56 222.94Z" fill="#ffffff"/><path d="M585.27 196.33A93.3 93.3 0 0 1 581.85 152.90L596.57 155.24A78.4 78.4 0 0 0 599.44 191.73Z" fill="#fef1e8"/><path d="M581.85 152.90A93.3 93.3 0 0 1 598.52 112.66L610.57 121.42A78.4 78.4 0 0 0 596.57 155.24Z" fill="#fcdecb"/><path d="M598.52 112.66A93.3 93.3 0 0 1 631.64 84.37L638.41 97.65A78.4 78.4 0 0 0 610.57 121.42Z" fill="#f9c5a3"/><path d="M631.64 84.37A93.3 93.3 0 0 1 674.00 74.20L674.00 89.10A78.4 78.4 0 0 0 638.41 97.65Z" fill="#f7ae82"/><path d="M674.00 74.20A93.3 93.3 0 0 1 716.36 84.37L709.59 97.65A78.4 78.4 0 0 0 674.00 89.10Z" fill="#f5985a"/><path d="M716.36 84.37A93.3 93.3 0 0 1 749.48 112.66L737.43 121.42A78.4 78.4 0 0 0 709.59 97.65Z" fill="#f3853a"/><path d="M749.48 112.66A93.3 93.3 0 0 1 766.15 152.90L751.43 155.24A78.4 78.4 0 0 0 737.43 121.42Z" fill="#f17525"/><path d="M766.15 152.90A93.3 93.3 0 0 1 762.73 196.33L748.56 191.73A78.4 78.4 0 0 0 751.43 155.24Z" fill="#ef6a17"/><path d="M762.73 196.33A93.3 93.3 0 0 1 739.97 233.47L729.44 222.94A78.4 78.4 0 0 0 748.56 191.73Z" fill="#ee6510"/><path d="M604.99 230.29L610.76 225.04M602.11 226.97L608.12 222.00M599.39 223.52L605.63 218.84M596.83 219.94L603.28 215.56M594.45 216.25L601.10 212.17M592.24 212.45L599.08 208.69M590.21 208.55L597.22 205.11M588.37 204.55L595.53 201.46M586.72 200.48L594.02 197.72" stroke="#3e2a1e" stroke-opacity="0.85" stroke-width="0.75" fill="none"/><path d="M584.01 192.12L591.53 190.06M582.95 187.85L590.56 186.15M582.09 183.54L589.77 182.20M581.44 179.19L589.17 178.22M580.99 174.82L588.76 174.21M580.75 170.43L588.54 170.19M580.71 166.03L588.51 166.16M580.88 161.64L588.67 162.13M581.26 157.26L589.02 158.12" stroke="#3e2a1e" stroke-opacity="0.82" stroke-width="0.75" fill="none"/><path d="M582.64 148.58L590.28 150.16M583.63 144.30L591.19 146.24M584.82 140.07L592.28 142.36M586.22 135.90L593.55 138.54M587.80 131.80L595.01 134.78M589.58 127.77L596.64 131.10M591.54 123.84L598.44 127.49M593.69 120.01L600.41 123.98M596.02 116.28L602.54 120.56" stroke="#3e2a1e" stroke-opacity="0.78" stroke-width="0.75" fill="none"/><path d="M601.19 109.16L607.27 114.04M604.01 105.80L609.87 110.96M607.00 102.57L612.60 108.00M610.13 99.49L615.47 105.17M613.41 96.55L618.47 102.49M616.82 93.78L621.60 99.94M620.35 91.17L624.84 97.55M624.01 88.72L628.19 95.31M627.77 86.46L631.64 93.23" stroke="#3e2a1e" stroke-opacity="0.66" stroke-width="0.75" fill="none"/><path d="M635.61 82.47L638.82 89.58M639.65 80.75L642.53 88.00M643.78 79.23L646.31 86.61M647.97 77.90L650.15 85.39M652.22 76.78L654.04 84.36M656.52 75.85L657.98 83.51M660.85 75.13L661.95 82.85M665.22 74.61L665.95 82.38M669.60 74.30L669.97 82.09" stroke="#3e2a1e" stroke-opacity="0.55" stroke-width="0.75" fill="none"/><path d="M678.40 74.30L678.03 82.09M682.78 74.61L682.05 82.38M687.15 75.13L686.05 82.85M691.48 75.85L690.02 83.51M695.78 76.78L693.96 84.36M700.03 77.90L697.85 85.39M704.22 79.23L701.69 86.61M708.35 80.75L705.47 88.00M712.39 82.47L709.18 89.58" stroke="#3e2a1e" stroke-opacity="0.42" stroke-width="0.75" fill="none"/><path d="M720.23 86.46L716.36 93.23M723.99 88.72L719.81 95.31M727.65 91.17L723.16 97.55M731.18 93.78L726.40 99.94M734.59 96.55L729.53 102.49M737.87 99.49L732.53 105.17M741.00 102.57L735.40 108.00M743.99 105.80L738.13 110.96M746.81 109.16L740.73 114.04" stroke="#3e2a1e" stroke-opacity="0.3" stroke-width="0.75" fill="none"/><path d="M751.98 116.28L745.46 120.56M754.31 120.01L747.59 123.98M756.46 123.84L749.56 127.49M758.42 127.77L751.36 131.10M760.20 131.80L752.99 134.78M761.78 135.90L754.45 138.54M763.18 140.07L755.72 142.36M764.37 144.30L756.81 146.24M765.36 148.58L757.72 150.16" stroke="#3e2a1e" stroke-opacity="0.2" stroke-width="0.75" fill="none"/><path d="M766.74 157.26L758.98 158.12M767.12 161.64L759.33 162.13M767.29 166.03L759.49 166.16M767.25 170.43L759.46 170.19M767.01 174.82L759.24 174.21M766.56 179.19L758.83 178.22M765.91 183.54L758.23 182.20M765.05 187.85L757.44 186.15M763.99 192.12L756.47 190.06" stroke="#3e2a1e" stroke-opacity="0.14" stroke-width="0.75" fill="none"/><path d="M761.28 200.48L753.98 197.72M759.63 204.55L752.47 201.46M757.79 208.55L750.78 205.11M755.76 212.45L748.92 208.69M753.55 216.25L746.90 212.17M751.17 219.94L744.72 215.56M748.61 223.52L742.37 218.84M745.89 226.97L739.88 222.00M743.01 230.29L737.24 225.04" stroke="#3e2a1e" stroke-opacity="0.1" stroke-width="0.75" fill="none"/><path d="M608.03 233.47A93.3 93.3 0 1 1 739.97 233.47" stroke="#3a2a22" stroke-width="0.9" fill="none"/><line x1="608.03" y1="233.47" x2="618.56" y2="222.94" stroke="#2a1a12" stroke-width="1"/><line x1="585.27" y1="196.33" x2="599.91" y2="191.57" stroke="#2a1a12" stroke-width="1"/><line x1="581.85" y1="152.90" x2="597.06" y2="155.31" stroke="#2a1a12" stroke-width="1"/><line x1="598.52" y1="112.66" x2="610.98" y2="121.71" stroke="#2a1a12" stroke-width="1"/><line x1="631.64" y1="84.37" x2="638.63" y2="98.09" stroke="#2a1a12" stroke-width="1"/><line x1="674.00" y1="74.20" x2="674.00" y2="89.60" stroke="#2a1a12" stroke-width="1"/><line x1="716.36" y1="84.37" x2="709.37" y2="98.09" stroke="#2a1a12" stroke-width="1"/><line x1="749.48" y1="112.66" x2="737.02" y2="121.71" stroke="#2a1a12" stroke-width="1"/><line x1="766.15" y1="152.90" x2="750.94" y2="155.31" stroke="#2a1a12" stroke-width="1"/><line x1="762.73" y1="196.33" x2="748.09" y2="191.57" stroke="#2a1a12" stroke-width="1"/><text x="622.80" y="220.90" font-size="9.2" font-weight="700" fill="#505050" text-anchor="middle">0</text><text x="607.27" y="191.24" font-size="9.2" font-weight="700" fill="#505050" text-anchor="middle">10</text><text x="604.67" y="159.59" font-size="9.2" font-weight="700" fill="#505050" text-anchor="middle">20</text><text x="616.56" y="128.97" font-size="9.2" font-weight="700" fill="#505050" text-anchor="middle">30</text><text x="641.77" y="107.44" font-size="9.2" font-weight="700" fill="#505050" text-anchor="middle">40</text><text x="674.00" y="99.70" font-size="9.2" font-weight="700" fill="#505050" text-anchor="middle">50</text><text x="706.23" y="107.44" font-size="9.2" font-weight="700" fill="#505050" text-anchor="middle">60</text><text x="731.44" y="128.97" font-size="9.2" font-weight="700" fill="#505050" text-anchor="middle">70</text><text x="743.33" y="159.59" font-size="9.2" font-weight="700" fill="#505050" text-anchor="middle">80</text><text x="740.93" y="191.34" font-size="9.2" font-weight="700" fill="#505050" text-anchor="middle">90</text><text x="722.70" y="218.50" font-size="9.2" font-weight="700" fill="#505050" text-anchor="middle">100</text><text x="673.7" y="145.70" font-size="13.2" fill="#6a6a6a" stroke="#6a6a6a" stroke-width="0.35" text-anchor="middle" textLength="62.5" lengthAdjust="spacingAndGlyphs">Phase 3 [A]</text><rect x="629.2" y="223.6" width="89.39999999999998" height="26.900000000000006" rx="3.5" fill="url(#vbc)" stroke="#4a4a4a" stroke-width="2"/><text x="674.3" y="242.6" font-size="20" fill="#262626" stroke="#262626" stroke-width="0.35" text-anchor="middle" textLength="43.5" lengthAdjust="spacingAndGlyphs">001.7</text><g transform="translate(674.0,167.5) rotate(49.59)"><path d="M-0.7 84.5L0.7 84.5L3.1 -19.5L-3.1 -19.5Z" fill="url(#ndc)"/></g><circle cx="673.8" cy="167.9" r="9.3" fill="#000" opacity="0.10"/><circle cx="673.5" cy="167.1" r="8.7" fill="url(#cpc)" stroke="#e6e6e6" stroke-width="0.6"/>
<g transform="translate(309.65,66.75) scale(0.3958)" fill="#111" stroke="#111" stroke-width="0" stroke-linejoin="round"><path d="M14 2H6c-1.100 0-2 .900-2 2v16c0 1.100.900 2 2 2h12c1.100 0 2-.900 2-2V8l-6-6z"/><path fill="#fff" stroke="none" d="M13 3.500V9h5.500z"/><path fill="#fff" stroke="none" d="M7.500 14.500h5v-3l4.500 4.500-4.500 4.500v-3h-5z"/></g>
<g transform="translate(324.75,66.75) scale(0.3958)" fill="#111" stroke="#111" stroke-width="0.1" stroke-linejoin="round"><path d="M7 14H5v5h5v-2H7v-3zm-2-4h2V7h3V5H5v5zm12 7h-3v2h5v-5h-2v3zM14 5v2h3v3h2V5h-5z"/></g>
<g transform="translate(529.65,66.75) scale(0.3958)" fill="#111" stroke="#111" stroke-width="0" stroke-linejoin="round"><path d="M14 2H6c-1.100 0-2 .900-2 2v16c0 1.100.900 2 2 2h12c1.100 0 2-.900 2-2V8l-6-6z"/><path fill="#fff" stroke="none" d="M13 3.500V9h5.500z"/><path fill="#fff" stroke="none" d="M7.500 14.500h5v-3l4.500 4.500-4.500 4.500v-3h-5z"/></g>
<g transform="translate(544.75,66.75) scale(0.3958)" fill="#111" stroke="#111" stroke-width="0.1" stroke-linejoin="round"><path d="M7 14H5v5h5v-2H7v-3zm-2-4h2V7h3V5H5v5zm12 7h-3v2h5v-5h-2v3zM14 5v2h3v3h2V5h-5z"/></g>
<g transform="translate(750.65,66.75) scale(0.3958)" fill="#111" stroke="#111" stroke-width="0" stroke-linejoin="round"><path d="M14 2H6c-1.100 0-2 .900-2 2v16c0 1.100.900 2 2 2h12c1.100 0 2-.900 2-2V8l-6-6z"/><path fill="#fff" stroke="none" d="M13 3.500V9h5.500z"/><path fill="#fff" stroke="none" d="M7.500 14.500h5v-3l4.500 4.500-4.500 4.500v-3h-5z"/></g>
<g transform="translate(765.75,66.75) scale(0.3958)" fill="#111" stroke="#111" stroke-width="0.1" stroke-linejoin="round"><path d="M7 14H5v5h5v-2H7v-3zm-2-4h2V7h3V5H5v5zm12 7h-3v2h5v-5h-2v3zM14 5v2h3v3h2V5h-5z"/></g>
<g transform="translate(749.85,289.25) scale(0.3958)" fill="#111" stroke="#111" stroke-width="0" stroke-linejoin="round"><path d="M14 2H6c-1.100 0-2 .900-2 2v16c0 1.100.900 2 2 2h12c1.100 0 2-.900 2-2V8l-6-6z"/><path fill="#fff" stroke="none" d="M13 3.500V9h5.500z"/><path fill="#fff" stroke="none" d="M7.500 14.500h5v-3l4.500 4.500-4.500 4.500v-3h-5z"/></g>
<g transform="translate(765.25,289.25) scale(0.3958)" fill="#111" stroke="#111" stroke-width="0.1" stroke-linejoin="round"><path d="M7 14H5v5h5v-2H7v-3zm-2-4h2V7h3V5H5v5zm12 7h-3v2h5v-5h-2v3zM14 5v2h3v3h2V5h-5z"/></g>
<g transform="translate(136.45,299.65) scale(0.4792)" fill="#222" stroke="#222" stroke-width="0.2" stroke-linejoin="round"><path d="M11.990 2C6.470 2 2 6.480 2 12s4.470 10 9.990 10C17.520 22 22 17.520 22 12S17.520 2 11.990 2zM12 20c-4.420 0-8-3.580-8-8s3.580-8 8-8 8 3.580 8 8-3.580 8-8 8zm.500-13H11v6l5.250 3.150.750-1.230-4.500-2.670z"/></g>
<rect x="138.0" y="321.5" width="632.0" height="113.80000000000001" fill="#fff"/><path d="M141.70 321.5V435.3M176.56 321.5V435.3M211.42 321.5V435.3M246.28 321.5V435.3M281.14 321.5V435.3M316.00 321.5V435.3M350.86 321.5V435.3M385.72 321.5V435.3M420.58 321.5V435.3M455.44 321.5V435.3M490.30 321.5V435.3M525.16 321.5V435.3M560.02 321.5V435.3M594.88 321.5V435.3M629.74 321.5V435.3M664.60 321.5V435.3M699.46 321.5V435.3M734.32 321.5V435.3M769.18 321.5V435.3M138.0 419.04H770.0M138.0 402.79H770.0M138.0 386.53H770.0M138.0 370.27H770.0M138.0 354.01H770.0M138.0 337.76H770.0" stroke="#e3e3e3" stroke-width="0.7" fill="none"/><rect x="138.0" y="321.5" width="632.0" height="113.80000000000001" fill="none" stroke="#6e6e6e" stroke-width="1"/><text x="135.0" y="436.90" font-size="4.7" fill="#3a3a3a" text-anchor="end">0</text><text x="135.0" y="420.64" font-size="4.7" fill="#3a3a3a" text-anchor="end">10</text><text x="135.0" y="404.39" font-size="4.7" fill="#3a3a3a" text-anchor="end">20</text><text x="135.0" y="388.13" font-size="4.7" fill="#3a3a3a" text-anchor="end">30</text><text x="135.0" y="371.87" font-size="4.7" fill="#3a3a3a" text-anchor="end">40</text><text x="135.0" y="355.61" font-size="4.7" fill="#3a3a3a" text-anchor="end">50</text><text x="135.0" y="339.36" font-size="4.7" fill="#3a3a3a" text-anchor="end">60</text><text x="135.0" y="323.10" font-size="4.7" fill="#3a3a3a" text-anchor="end">70</text><text x="141.70" y="442.00" font-size="4.6" fill="#3a3a3a" text-anchor="middle">13:20</text><text x="176.56" y="442.00" font-size="4.6" fill="#3a3a3a" text-anchor="middle">13:30</text><text x="211.42" y="442.00" font-size="4.6" fill="#3a3a3a" text-anchor="middle">13:40</text><text x="246.28" y="442.00" font-size="4.6" fill="#3a3a3a" text-anchor="middle">13:50</text><text x="281.14" y="442.00" font-size="4.6" fill="#3a3a3a" text-anchor="middle">14:00</text><text x="316.00" y="442.00" font-size="4.6" fill="#3a3a3a" text-anchor="middle">14:10</text><text x="350.86" y="442.00" font-size="4.6" fill="#3a3a3a" text-anchor="middle">14:20</text><text x="385.72" y="442.00" font-size="4.6" fill="#3a3a3a" text-anchor="middle">14:30</text><text x="420.58" y="442.00" font-size="4.6" fill="#3a3a3a" text-anchor="middle">14:40</text><text x="455.44" y="442.00" font-size="4.6" fill="#3a3a3a" text-anchor="middle">14:50</text><text x="490.30" y="442.00" font-size="4.6" fill="#3a3a3a" text-anchor="middle">15:00</text><text x="525.16" y="442.00" font-size="4.6" fill="#3a3a3a" text-anchor="middle">15:10</text><text x="560.02" y="442.00" font-size="4.6" fill="#3a3a3a" text-anchor="middle">15:20</text><text x="594.88" y="442.00" font-size="4.6" fill="#3a3a3a" text-anchor="middle">15:30</text><text x="629.74" y="442.00" font-size="4.6" fill="#3a3a3a" text-anchor="middle">15:40</text><text x="664.60" y="442.00" font-size="4.6" fill="#3a3a3a" text-anchor="middle">15:50</text><text x="699.46" y="442.00" font-size="4.6" fill="#3a3a3a" text-anchor="middle">16:00</text><text x="734.32" y="442.00" font-size="4.6" fill="#3a3a3a" text-anchor="middle">16:10</text><text x="768.68" y="442.00" font-size="4.6" fill="#3a3a3a" text-anchor="middle">16:20</text><path d="M190.4 431.4L195.0 421.5L199.0 411.5L202.5 402.0L205.5 390.0L208.0 371.0L210.0 350.0L211.6 338.6L300.0 338.2L406.5 337.6L500.0 337.8L600.0 338.2L692.4 338.6L699.6 380.0" stroke="#707070" stroke-width="1.7" fill="none" stroke-linejoin="round"/><path d="M190.4 431.4L204.4 403.3L300.0 403.1L406.5 402.9L600.0 403.1L692.6 403.3L700.0 417.2" stroke="#c86b2a" stroke-width="1.0" fill="none"/><path d="M190.4 431.4L204.4 403.3L300.0 403.1L406.5 402.9L600.0 403.1L692.6 403.3L700.0 417.2" stroke="#0c0c0c" stroke-width="2.0" fill="none" stroke-linejoin="round"/><line x1="408.6" y1="321.5" x2="408.6" y2="435.3" stroke="#b5493c" stroke-width="0.8"/><circle cx="406.6" cy="337.6" r="3.4" fill="#8a8686" stroke="#b5b1b1" stroke-width="0.8"/><circle cx="406.6" cy="403" r="3.4" fill="#2a110a" stroke="#5a3326" stroke-width="0.8"/><rect x="411" y="401.5" width="68.5" height="41.5" rx="2" fill="#2f2f2f" fill-opacity="0.94"/><text x="445.2" y="411.9" font-size="6.3" font-weight="700" fill="#fff" text-anchor="middle" textLength="55.5" lengthAdjust="spacingAndGlyphs">2021-06-30 14:36:00</text><line x1="416" y1="420.3" x2="425" y2="420.3" stroke="#9a9a9a" stroke-width="1.3"/><text x="427.3" y="422.2" font-size="5.5" font-weight="400" fill="#d8d8d8">Phase 3:</text><text x="474.6" y="422.2" font-size="5.5" font-weight="700" fill="#fff" text-anchor="end">60.24</text><line x1="416" y1="428.9" x2="425" y2="428.9" stroke="#c8742e" stroke-width="1.3"/><text x="427.3" y="430.79999999999995" font-size="5.5" font-weight="700" fill="#fff">Phase 1:</text><text x="474.6" y="430.79999999999995" font-size="5.5" font-weight="700" fill="#fff" text-anchor="end">20.01</text><line x1="416" y1="438.0" x2="425" y2="438.0" stroke="#0a0a0a" stroke-width="1.3"/><text x="427.3" y="439.9" font-size="5.5" font-weight="400" fill="#d8d8d8">Phase 2:</text><text x="474.6" y="439.9" font-size="5.5" font-weight="700" fill="#fff" text-anchor="end">19.85</text>
<line x1="130.2" y1="460.2" x2="137.6" y2="460.2" stroke="#c8742e" stroke-width="1.3"/>
<line x1="130.2" y1="469.4" x2="137.6" y2="469.4" stroke="#0a0a0a" stroke-width="1.8"/>
<line x1="130.2" y1="478.5" x2="137.6" y2="478.5" stroke="#5e5e5e" stroke-width="1.3"/>
<path d="M131.2 487.2l2-1.6v3.2z" fill="#444"/>
<path d="M775.6 487.2l-2.6-2v4z" fill="#111"/></svg>
</body></html>
